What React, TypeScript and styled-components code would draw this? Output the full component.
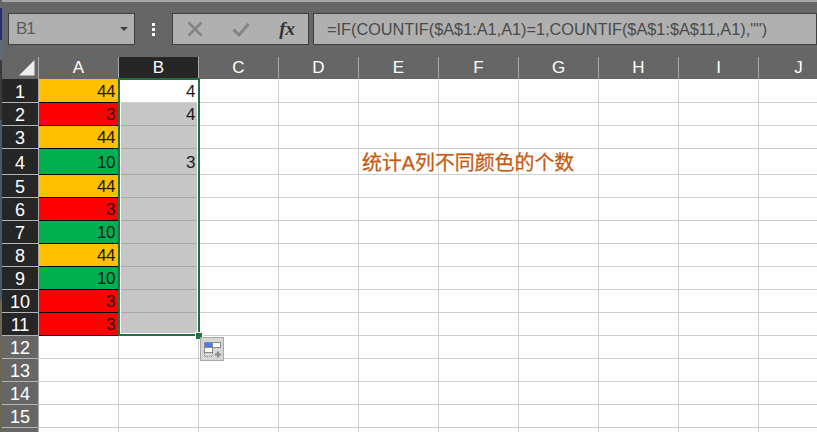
import styled, { createGlobalStyle } from "styled-components";

type Fill = "yellow" | "red" | "green";

const fills: Record<Fill, string> = {
  yellow: "#ffc000",
  red: "#ff0000",
  green: "#00b050",
};

const columns = ["A", "B", "C", "D", "E", "F", "G", "H", "I", "J"];
const rowHeights = [24, 23, 23, 26, 23, 23, 23, 23, 23, 23, 23, 23, 23, 23, 23, 23];

const columnA: { value: number; fill: Fill }[] = [
  { value: 44, fill: "yellow" },
  { value: 3, fill: "red" },
  { value: 44, fill: "yellow" },
  { value: 10, fill: "green" },
  { value: 44, fill: "yellow" },
  { value: 3, fill: "red" },
  { value: 10, fill: "green" },
  { value: 44, fill: "yellow" },
  { value: 10, fill: "green" },
  { value: 3, fill: "red" },
  { value: 3, fill: "red" },
];

const columnB: Record<number, number> = { 0: 4, 1: 4, 3: 3 };

const App = () => {
  return (
    <Window>
      <GlobalStyle />
      <DesktopEdge />
      <Main>
        <TopEdge />
        <FormulaBar>
          <NameBox>
            B1
            <Caret />
          </NameBox>
          <Grip>
            <i />
            <i />
            <i />
          </Grip>
          <ActionBox>
            <svg width="16" height="16" viewBox="0 0 16 16">
              <path d="M1.5 1.5 14.5 14.5M14.5 1.5 1.5 14.5" stroke="#858585" strokeWidth="2.6" fill="none" />
            </svg>
            <svg width="18" height="15" viewBox="0 0 18 15">
              <path d="M1.5 7.5 7 13 16.5 2" stroke="#858585" strokeWidth="3" fill="none" />
            </svg>
            <Fx>fx</Fx>
          </ActionBox>
          <FormulaBox>=IF(COUNTIF($A$1:A1,A1)=1,COUNTIF($A$1:$A$11,A1),"")</FormulaBox>
        </FormulaBar>
        <Sheet>
          <HeaderRow>
            <Corner>
              <svg width="16" height="16" viewBox="0 0 16 16">
                <path d="M0 15.5 15.5 0V15.5Z" fill="#eeeeee" />
              </svg>
            </Corner>
            {columns.map((c) => (
              <ColumnHead key={c} $active={c === "B"}>
                {c}
              </ColumnHead>
            ))}
          </HeaderRow>
          {rowHeights.map((h, i) => {
            const a = columnA[i];
            const inSelection = i < 11;
            return (
              <Row key={i} $height={h}>
                {/* row 16 only peeks in at the bottom, its number is out of view */}
                <RowHead $active={inSelection}>{i < 15 ? i + 1 : null}</RowHead>
                <Cell $fill={a ? fills[a.fill] : undefined}>{a?.value}</Cell>
                <Cell $selected={inSelection && i > 0}>{columnB[i]}</Cell>
                {columns.slice(2).map((c) => (
                  <Cell key={c}>{c === "E" && i === 3 && <Note>统计A列不同颜色的个数</Note>}</Cell>
                ))}
              </Row>
            );
          })}
          <Selection />
          <FillHandle />
          <PasteOptions>
            <svg width="22" height="22" viewBox="0 0 22 22">
              <rect x="3.5" y="4.5" width="8" height="5" fill="#3f7ff0" stroke="#8a8a8a" />
              <rect x="11.5" y="4.5" width="8" height="5" fill="#ffffff" stroke="#8a8a8a" />
              <rect x="3.5" y="9.5" width="8" height="5" fill="#ffffff" stroke="#8a8a8a" />
              <path d="M3.5 15v3.5h8V15" fill="none" stroke="#8a8a8a" strokeDasharray="1 1" />
              <path d="M14 16.5h6M17 13.5v6" stroke="#8a8a8a" strokeWidth="2" fill="none" />
            </svg>
          </PasteOptions>
        </Sheet>
      </Main>
    </Window>
  );
};

const GlobalStyle = createGlobalStyle`
  html, body {
    margin: 0;
    padding: 0;
    background: #666666;
    overflow: hidden;
  }
`;

const Window = styled.div`
  display: flex;
  width: 817px;
  height: 432px;
  overflow: hidden;
  background: #666666;
  font-family: "Liberation Sans", Arial, sans-serif;
`;

const DesktopEdge = styled.div`
  flex: 0 0 2px;
  background: linear-gradient(
    #666666 0 8px,
    #1c2f7a 8px 40px,
    #5a6a80 40px 60px,
    #3a3a3a 60px 120px,
    #47586e 120px 300px,
    #6d6650 300px 432px
  );
`;

const Main = styled.div`
  flex: 1;
  min-width: 0;
  display: flex;
  flex-direction: column;
`;

const TopEdge = styled.div`
  flex: 0 0 2px;
  background: #a6a6a6;
`;

const FormulaBar = styled.div`
  flex: 0 0 55px;
  box-sizing: border-box;
  display: flex;
  align-items: flex-start;
  padding: 11px 0 0 6px;
`;

const FieldBox = styled.div`
  box-sizing: border-box;
  height: 32px;
  background: #b0b0b0;
  border: 1px solid #3f3f3f;
  display: flex;
  align-items: center;
`;

const NameBox = styled(FieldBox)`
  width: 127px;
  padding: 0 6px 0 7px;
  justify-content: space-between;
  color: #5c5c5c;
  font-size: 17px;
  letter-spacing: -1px;
`;

const Caret = styled.span`
  width: 0;
  height: 0;
  border-left: 4px solid transparent;
  border-right: 4px solid transparent;
  border-top: 4px solid #3f3f3f;
`;

const Grip = styled.div`
  flex: 0 0 37px;
  height: 32px;
  display: flex;
  flex-direction: column;
  align-items: center;
  justify-content: center;
  gap: 2px;

  i {
    width: 3px;
    height: 3px;
    background: #ffffff;
  }
`;

const ActionBox = styled(FieldBox)`
  width: 137px;
  margin-right: 4px;
  padding: 0 13px 0 14px;
  justify-content: space-between;
`;

const Fx = styled.span`
  font-family: "Liberation Serif", serif;
  font-style: italic;
  font-weight: bold;
  font-size: 19px;
  color: #333333;
`;

const FormulaBox = styled(FieldBox)`
  flex: 1;
  padding-left: 13px;
  color: #4a4a4a;
  font-size: 16.3px;
  white-space: nowrap;
`;

const Sheet = styled.div`
  position: relative;
  flex: 1;
  min-height: 0;
  overflow: hidden;
`;

const HeaderRow = styled.div`
  display: grid;
  grid-template-columns: 37px repeat(10, 80px);
  height: 22px;
`;

const Corner = styled.div`
  box-sizing: border-box;
  border-right: 1px solid #a8a8a8;
  display: flex;
  align-items: flex-end;
  justify-content: flex-end;
  padding: 0 3px 3px 0;
`;

const ColumnHead = styled.div<{ $active?: boolean }>`
  box-sizing: border-box;
  border-right: 1px solid #a8a8a8;
  background: ${(p) => (p.$active ? "#262626" : "#666666")};
  color: #ffffff;
  font-size: 17px;
  display: flex;
  align-items: center;
  justify-content: center;
`;

const Row = styled.div<{ $height: number }>`
  display: grid;
  grid-template-columns: 37px repeat(10, 80px);
  grid-template-rows: ${(p) => p.$height}px;
  height: ${(p) => p.$height}px;
`;

const RowHead = styled.div<{ $active?: boolean }>`
  box-sizing: border-box;
  border-right: 1px solid #a8a8a8;
  border-bottom: 1px solid #b4b4b4;
  background: ${(p) => (p.$active ? "#262626" : "#666666")};
  color: #ffffff;
  font-size: 18px;
  line-height: 18px;
  padding-top: 2px;
  display: flex;
  align-items: center;
  justify-content: center;
`;

const Cell = styled.div<{ $fill?: string; $selected?: boolean }>`
  box-sizing: border-box;
  position: relative;
  border-right: 1px solid #d0d0d0;
  border-bottom: 1px solid
    ${(p) => (p.$fill ? "#000000" : p.$selected ? "#a8a8a8" : "#d0d0d0")};
  background: ${(p) => p.$fill ?? (p.$selected ? "#c6c6c6" : "#ffffff")};
  color: #1a1a1a;
  font-size: 17px;
  line-height: 18px;
  letter-spacing: -0.4px;
  display: flex;
  align-items: center;
  justify-content: flex-end;
  padding: 2px 3px 0 0;
`;

const Note = styled.span`
  position: absolute;
  z-index: 1;
  left: 3px;
  top: 2px;
  white-space: nowrap;
  letter-spacing: 0;
  color: #c55a11;
  font-family: "Liberation Sans", "Noto Sans CJK SC", sans-serif;
  font-size: 19.9px;
  line-height: 24px;
  -webkit-text-stroke: 0.25px #c55a11;
`;

const Selection = styled.div`
  position: absolute;
  left: 116px;
  top: 21px;
  width: 82px;
  height: 258px;
  box-sizing: border-box;
  border: 2px solid #1f7145;
  box-shadow: inset 0 0 0 1px #ffffff;
  pointer-events: none;
`;

const FillHandle = styled.div`
  position: absolute;
  left: 194px;
  top: 276px;
  width: 6px;
  height: 6px;
  background: #1f7145;
  outline: 1px solid #ffffff;
`;

const PasteOptions = styled.div`
  position: absolute;
  left: 198px;
  top: 280px;
  box-sizing: border-box;
  width: 24px;
  height: 24px;
  background: #d6d6d6;
  border: 1px solid #a8a8a8;
  display: flex;
`;

export default App;
